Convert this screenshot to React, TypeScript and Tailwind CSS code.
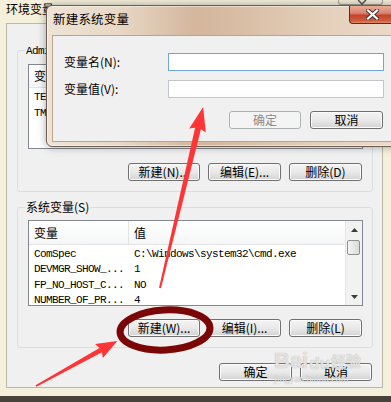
import React from 'react'

const ui = "font-['Noto_Sans_CJK_SC','Liberation_Sans',sans-serif]"
const mono = "font-['Liberation_Mono','Noto_Sans_CJK_SC',monospace]"

interface Row {
  name: string
  value: string
}

const userRows: Row[] = [
  { name: 'TEMP', value: '%USERPROFILE%\\AppData\\Local\\Temp' },
  { name: 'TMP', value: '%USERPROFILE%\\AppData\\Local\\Temp' },
]

const systemRows: Row[] = [
  { name: 'ComSpec', value: 'C:\\Windows\\system32\\cmd.exe' },
  { name: 'DEVMGR_SHOW_...', value: '1' },
  { name: 'FP_NO_HOST_C...', value: 'NO' },
  { name: 'NUMBER_OF_PR...', value: '4' },
]

function WinButton({ label, width, disabled }: { label: React.ReactNode; width: string; disabled?: boolean }) {
  return (
    <button
      className={`${width} h-[18px] rounded-[3px] border text-[12px] leading-none ${
        disabled
          ? 'border-[#adb2b5] bg-[#f4f4f4] text-[#8a8a8a]'
          : 'border-[#707070] bg-gradient-to-b from-[#f4f4f4] via-[#e9e9e9] to-[#d3d3d3] text-black shadow-[inset_0_0_0_1px_#fbfbfb]'
      }`}
    >
      {label}
    </button>
  )
}

function Triangle({ up }: { up?: boolean }) {
  return (
    <svg width="7" height="4" viewBox="0 0 7 4">
      <polygon points={up ? '3.5,0 7,4 0,4' : '0,0 7,0 3.5,4'} fill="#3c3c3c" />
    </svg>
  )
}

function ScrollBar() {
  return (
    <div className="flex w-[17px] shrink-0 flex-col border-l border-[#e6e6e6] bg-[#f2f2f2]">
      <div className="flex h-[17px] items-center justify-center">
        <Triangle up />
      </div>
      <div className="flex-1 pl-[1px] pr-[2px] pt-[2px]">
        <div className="h-[15px] rounded-[2px] border border-[#8f8f8f] bg-gradient-to-r from-[#f5f5f5] to-[#dadada]" />
      </div>
      <div className="flex h-[17px] items-center justify-center">
        <Triangle />
      </div>
    </div>
  )
}

function VarList({ rows, height, headerH, rowH, scroll }: { rows: Row[]; height: string; headerH: string; rowH: string; scroll?: boolean }) {
  return (
    <div className={`ml-[10px] flex w-[335px] ${height} border border-[#828790] bg-white`}>
      <div className="min-w-0 flex-1 overflow-hidden">
        <div className={`flex ${headerH} items-center border-b border-[#e3e3e3] bg-gradient-to-b from-white to-[#f5f6f7] text-[12px]`}>
          <div className="flex h-full w-[100px] shrink-0 items-center border-r border-[#e3e3e3] pl-[5px]">变量</div>
          <div className="pl-[5px]">值</div>
        </div>
        <div className="pt-[1px]">
          {rows.map((r) => (
            <div key={r.name} className={`flex ${rowH} items-center whitespace-nowrap ${mono} text-[11px] tracking-[-0.6px]`}>
              <span className="w-[100px] shrink-0 pl-[5px]">{r.name}</span>
              <span className="pl-[5px]">{r.value}</span>
            </div>
          ))}
        </div>
      </div>
      {scroll && <ScrollBar />}
    </div>
  )
}

function Group({ legend, mt, children }: { legend: React.ReactNode; mt: string; children: React.ReactNode }) {
  return (
    <fieldset className={`${mt} ml-[10px] w-[356px] rounded-[3px] border border-[#d5dfe5] pb-[10px]`}>
      <legend className="ml-[7px] px-[1px] text-[12px] leading-[16px]">{legend}</legend>
      {children}
    </fieldset>
  )
}

function NewVarDialog() {
  return (
    <div className="absolute left-[46px] top-[5px] flex h-[142px] w-[356px] flex-col rounded-[6px] border border-[#6b5e53] bg-[linear-gradient(90deg,#eee3d5_0%,#e8d8c6_20%,#d3b69c_42%,#dac0a7_58%,#e4d0bb_78%,#ebdbc9_100%)] shadow-[0_0_8px_rgba(0,0,0,0.35),inset_0_0_0_1px_rgba(255,255,255,0.45)]">
      <div className="flex h-[29px] items-start pl-[6px]">
        <span className="mt-[7px] text-[12.5px] leading-none tracking-[0.2px]">新建系统变量</span>
        <div className="ml-auto mr-[5px] flex h-[18px] w-[47px] items-center justify-center rounded-b-[4px] border border-t-0 border-[#5e2a20] bg-[linear-gradient(180deg,#e9ab97_0%,#d98470_42%,#c4432a_55%,#cf5a3c_85%,#e0876a_100%)]">
          <svg width="13" height="11" viewBox="0 0 13 11">
            <path d="M2 1.5 L11 9.5 M11 1.5 L2 9.5" stroke="#3b3b3b" strokeWidth="4.2" strokeLinecap="square" />
            <path d="M2 1.5 L11 9.5 M11 1.5 L2 9.5" stroke="#ffffff" strokeWidth="2.2" strokeLinecap="square" />
          </svg>
        </div>
      </div>
      <div className="mx-[5px] mb-[4px] flex-1 border border-[#b7a592] bg-[#f0f0f0] pl-[11px] pr-[12px]">
        <div className="mt-[17px] grid grid-cols-[104px_216px] items-center gap-y-[9px] text-[12px]">
          <span>变量名(N):</span>
          <div className="h-[18px] border border-[#6fa6dc] bg-white" />
          <span>变量值(V):</span>
          <div className="h-[18px] border border-[#c2c6cc] bg-white" />
        </div>
        <div className="mt-[13px] flex justify-end gap-[9px]">
          <WinButton label="确定" width="w-[72px]" disabled />
          <WinButton label="取消" width="w-[73px]" />
        </div>
      </div>
    </div>
  )
}

function Annotations() {
  return (
    <svg className="pointer-events-none absolute inset-0" width="391" height="402" viewBox="0 0 391 402">
      <ellipse cx="165" cy="330" rx="45" ry="20" transform="rotate(-3 165 330)" fill="none" stroke="#7a0606" strokeWidth="7" />
      <polygon transform="translate(160 288) rotate(-76.6)" points="0,-1 164,-3 162,-8.5 186,0 162,8.5 164,3 0,1" fill="#ff3434" />
      <polygon transform="translate(36 386) rotate(-29)" points="0,-1 74,-2.5 72,-8 93,0 72,8 74,2.5 0,1" fill="#ff3434" />
    </svg>
  )
}

function Watermark() {
  return (
    <div className="pointer-events-none absolute left-[274px] top-[350px] flex flex-col text-white/70 [text-shadow:0_0_1px_#9a9a9a]">
      <div className="flex items-end gap-[1px] font-['Liberation_Sans',sans-serif] font-bold leading-none">
        <span className="text-[22px]">Bai</span>
        <span className="text-[17px]">du</span>
        <span className={`${ui} mb-[4px] text-[15px]`}>经验</span>
      </div>
      <span className="mt-[2px] font-['Liberation_Serif',serif] text-[10px] leading-none">jingyan.baidu.com</span>
    </div>
  )
}

export default function App() {
  return (
    <div className={`relative h-[402px] w-[391px] overflow-hidden bg-gradient-to-b from-[#8c8270] to-[#47423a] text-black ${ui}`}>
      <div className="flex h-[396px] flex-col bg-[#f5f0dc] pb-[8px] pl-[6px] pr-[8px]">
        <div className="flex h-[23px] items-start">
          <span className="mt-[2px] text-[12px] leading-[13px]">环境变量</span>
          <div className="ml-auto flex h-[5px] w-[45px] justify-center rounded-b-[3px] border-x border-b border-[#a7a395] bg-[#f1ecd8]">
            <svg width="10" height="5" viewBox="0 0 10 5" className="ml-[3px]">
              <path d="M1 0 L5 4 L9 0" stroke="#555" strokeWidth="1.5" fill="none" />
            </svg>
          </div>
        </div>

        <div className="flex flex-1 flex-col border border-[#bcb7a6] bg-[#f0f0f0]">
          <Group
            mt="mt-[17px]"
            legend={
              <>
                <span className={`${mono} text-[11px] tracking-[-0.6px]`}>Administrator</span> 的用户变量(U)
              </>
            }
          >
            <div className="mt-[5px]">
              <VarList rows={userRows} height="h-[85px]" headerH="h-[23px]" rowH="h-[16px]" />
            </div>
            <div className="mt-[14px] flex justify-end gap-[8px] pr-[10px]">
              <WinButton label="新建(N)..." width="w-[72px]" />
              <WinButton label="编辑(E)..." width="w-[73px]" />
              <WinButton label="删除(D)" width="w-[73px]" />
            </div>
          </Group>

          <Group mt="mt-[7px]" legend="系统变量(S)">
            <div className="mt-[5px]">
              <VarList rows={systemRows} height="h-[86px]" headerH="h-[24px]" rowH="h-[15.5px]" scroll />
            </div>
            <div className="mt-[13px] flex justify-end gap-[8px] pr-[10px]">
              <WinButton label="新建(W)..." width="w-[72px]" />
              <WinButton label="编辑(I)..." width="w-[73px]" />
              <WinButton label="删除(L)" width="w-[73px]" />
            </div>
          </Group>

          <div className="mt-[15px] flex justify-end gap-[8px] pr-[10px]">
            <WinButton label="确定" width="w-[73px]" />
            <WinButton label="取消" width="w-[72px]" />
          </div>
        </div>
      </div>

      <NewVarDialog />
      <Annotations />
      <Watermark />
    </div>
  )
}
